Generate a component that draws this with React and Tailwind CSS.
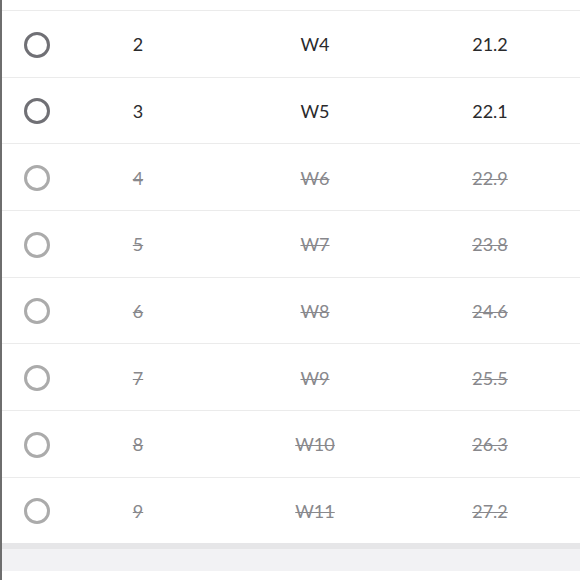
const rows = [
  { n: 2, w: 'W4', v: '21.2', done: false },
  { n: 3, w: 'W5', v: '22.1', done: false },
  { n: 4, w: 'W6', v: '22.9', done: true },
  { n: 5, w: 'W7', v: '23.8', done: true },
  { n: 6, w: 'W8', v: '24.6', done: true },
  { n: 7, w: 'W9', v: '25.5', done: true },
  { n: 8, w: 'W10', v: '26.3', done: true },
  { n: 9, w: 'W11', v: '27.2', done: true },
]

function Row({ n, w, v, done }) {
  const text = done ? 'text-[#88888c] line-through decoration-1' : 'text-[#2a2a2c]'
  return (
    <div className="flex h-[66.67px] items-center border-t border-[#ebebeb] pt-[2px] text-[18px]">
      <div className="flex w-[70px] justify-center">
        <span
          className={
            'block h-[26px] w-[26px] rounded-full border-[3px] ' +
            (done ? 'border-[#ababab]' : 'border-[#707075]')
          }
        />
      </div>
      <div className={'w-[132px] text-center ' + text}>{n}</div>
      <div className={'w-[222px] text-center ' + text}>{w}</div>
      <div className={'w-[128px] text-center ' + text}>{v}</div>
    </div>
  )
}

export default function App() {
  return (
    <div
      className="flex h-[580px] w-[580px] flex-col overflow-hidden border-l-2 border-[#6e6e6e] bg-white"
      style={{ fontFamily: 'Lato, "Open Sans", sans-serif' }}
    >
      <div className="h-[10px] shrink-0" />
      {rows.map((r) => (
        <Row key={r.n} {...r} />
      ))}
      <div className="h-[6px] shrink-0 bg-[#e6e6e8]" />
      <div className="h-[22px] shrink-0 bg-[#f2f2f4]" />
      <div className="flex-1 bg-white" />
    </div>
  )
}
